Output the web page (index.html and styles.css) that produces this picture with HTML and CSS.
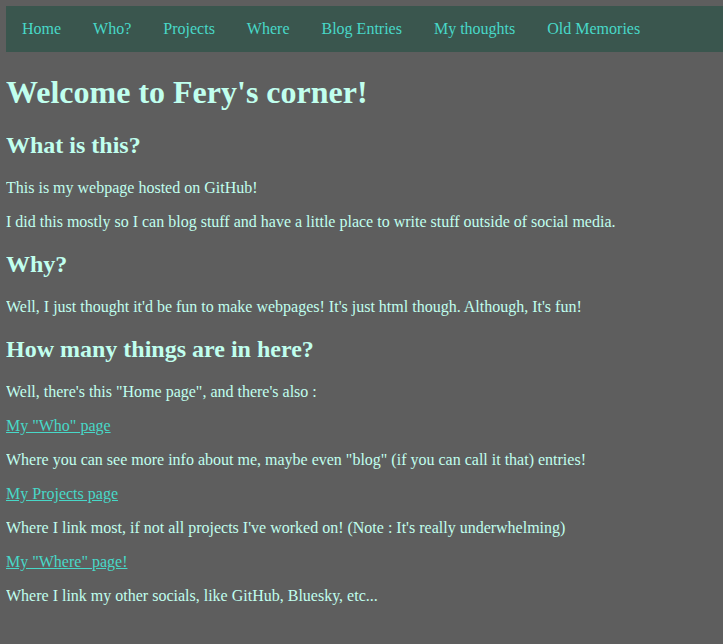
FILE: index.html
```html
<!DOCTYPE html>
<html lang="en">
<head>
<meta charset="utf-8">
<title>Fery's corner</title>
<link rel="stylesheet" href="styles.css">
</head>
<body>
<nav class="topnav">
  <a href="#">Home</a>
  <a href="#">Who?</a>
  <a href="#">Projects</a>
  <a href="#">Where</a>
  <a href="#">Blog Entries</a>
  <a href="#">My thoughts</a>
  <a href="#">Old Memories</a>
</nav>
<h1>Welcome to Fery's corner!</h1>
<h2>What is this?</h2>
<p>This is my webpage hosted on GitHub!</p>
<p>I did this mostly so I can blog stuff and have a little place to write stuff outside of social media.</p>
<h2>Why?</h2>
<p>Well, I just thought it'd be fun to make webpages! It's just html though. Although, It's fun!</p>
<h2>How many things are in here?</h2>
<p>Well, there's this "Home page", and there's also :</p>
<p><a class="link" href="#">My "Who" page</a></p>
<p>Where you can see more info about me, maybe even "blog" (if you can call it that) entries!</p>
<p><a class="link" href="#">My Projects page</a></p>
<p>Where I link most, if not all projects I've worked on! (Note : It's really underwhelming)</p>
<p><a class="link" href="#">My "Where" page!</a></p>
<p>Where I link my other socials, like GitHub, Bluesky, etc...</p>
</body>
</html>
```
FILE: styles.css
```css
html {
  background: #5e5e5e;
}
body {
  margin: 6px 0 6px 6px;
  font-family: "Liberation Serif", "Times New Roman", serif;
  font-size: 16px;
  color: #c0ffee;
  background: #5e5e5e;
}
.topnav {
  display: flex;
  align-items: center;
  height: 46px;
  background: #3a564e;
  padding-left: 0;
}
.topnav a {
  color: #48d8c8;
  text-decoration: none;
  padding: 0 16px;
}
h1 {
  margin-top: 22px;
}
.link {
  color: #48d8c8;
}
```
